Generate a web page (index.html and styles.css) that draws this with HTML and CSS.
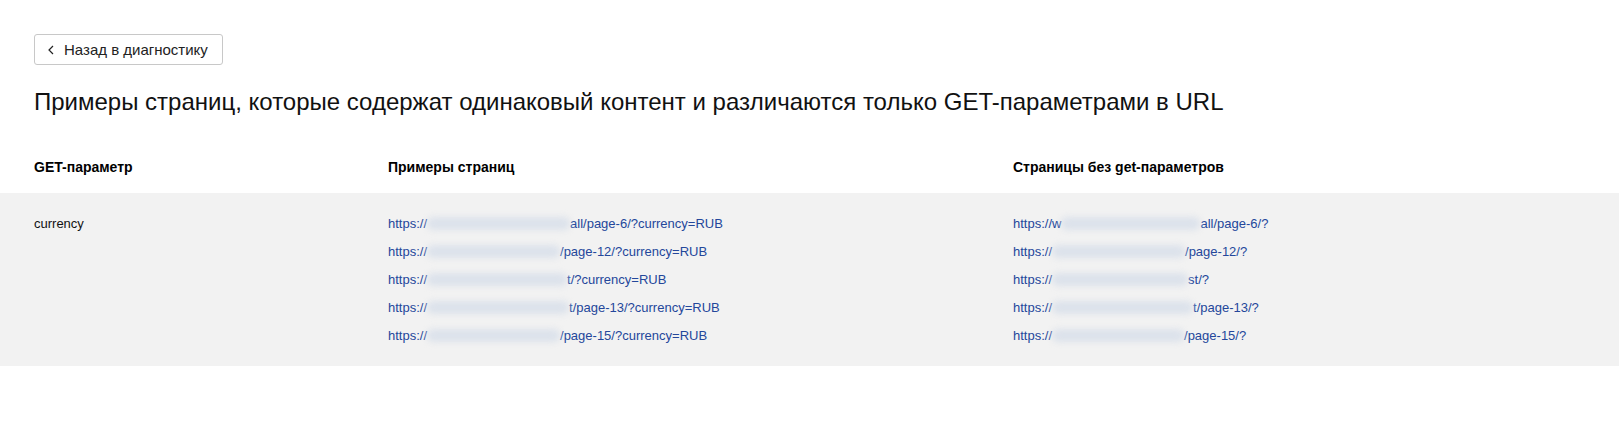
FILE: index.html
```html
<!DOCTYPE html>
<html lang="ru">
<head>
    <meta charset="UTF-8">
    <meta name="viewport" content="width=device-width, initial-scale=1.0">
    <title>Примеры страниц с GET-параметрами</title>
    <link rel="stylesheet" href="styles.css">
</head>
<body>
    <div class="page">
        <a class="back-btn" href="#">
            <svg class="back-icon" width="6" height="10" viewBox="0 0 6 10"><path d="M5 1 1 5l4 4" fill="none" stroke="#222" stroke-width="1.2"/></svg>
            <span>Назад в диагностику</span>
        </a>

        <h1>Примеры страниц, которые содержат одинаковый контент и различаются только GET-параметрами в URL</h1>
    </div>

    <div class="table">
        <div class="table-head">
            <div>GET-параметр</div>
            <div>Примеры страниц</div>
            <div>Страницы без get-параметров</div>
        </div>

        <div class="table-body">
            <div class="param">currency</div>
            <div class="links">
                <a href="#">https://<span class="blur w143"></span>all/page-6/?currency=RUB</a>
                <a href="#">https://<span class="blur w133"></span>/page-12/?currency=RUB</a>
                <a href="#">https://<span class="blur w140"></span>t/?currency=RUB</a>
                <a href="#">https://<span class="blur w142"></span>t/page-13/?currency=RUB</a>
                <a href="#">https://<span class="blur w133"></span>/page-15/?currency=RUB</a>
            </div>
            <div class="links">
                <a href="#">https://w<span class="blur w139"></span>all/page-6/?</a>
                <a href="#">https://<span class="blur w133"></span>/page-12/?</a>
                <a href="#">https://<span class="blur w136"></span>st/?</a>
                <a href="#">https://<span class="blur w141"></span>t/page-13/?</a>
                <a href="#">https://<span class="blur w132"></span>/page-15/?</a>
            </div>
        </div>
    </div>
</body>
</html>
```

FILE: styles.css
```css
body {
    margin: 0;
    font-family: "Liberation Sans", Arial, sans-serif;
    color: #000;
    background-color: #fff;
}

.page {
    padding: 34px 34px 0;
}

.back-btn {
    display: inline-flex;
    align-items: center;
    gap: 10px;
    height: 31px;
    box-sizing: border-box;
    padding: 0 14px 0 13px;
    border: 1px solid #c8c8c8;
    border-radius: 3px;
    color: #222;
    font-size: 15px;
    text-decoration: none;
}

.back-icon {
    display: block;
}

h1 {
    margin: 22px 0 0;
    font-size: 24px;
    line-height: 30px;
    font-weight: normal;
    color: #111;
}

.table-head,
.table-body {
    display: grid;
    grid-template-columns: 354px 625px 1fr;
    padding-left: 34px;
}

.table-head {
    margin-top: 40px;
    padding-bottom: 16px;
    font-size: 14px;
    line-height: 20px;
    font-weight: bold;
}

.table-body {
    background-color: #f2f2f2;
    padding-top: 17px;
    padding-bottom: 16px;
    font-size: 13px;
    line-height: 28px;
}

.param {
    color: #111;
}

.links {
    display: flex;
    flex-direction: column;
}

.links a {
    color: #24479b;
    text-decoration: none;
    white-space: nowrap;
}

.blur {
    display: inline-block;
    height: 13px;
    vertical-align: -2px;
    background-color: #dce2eb;
    border-radius: 6px;
    filter: blur(3px);
}

.w132 { width: 132px; }
.w133 { width: 133px; }
.w136 { width: 136px; }
.w139 { width: 139px; }
.w140 { width: 140px; }
.w141 { width: 141px; }
.w142 { width: 142px; }
.w143 { width: 143px; }
```
